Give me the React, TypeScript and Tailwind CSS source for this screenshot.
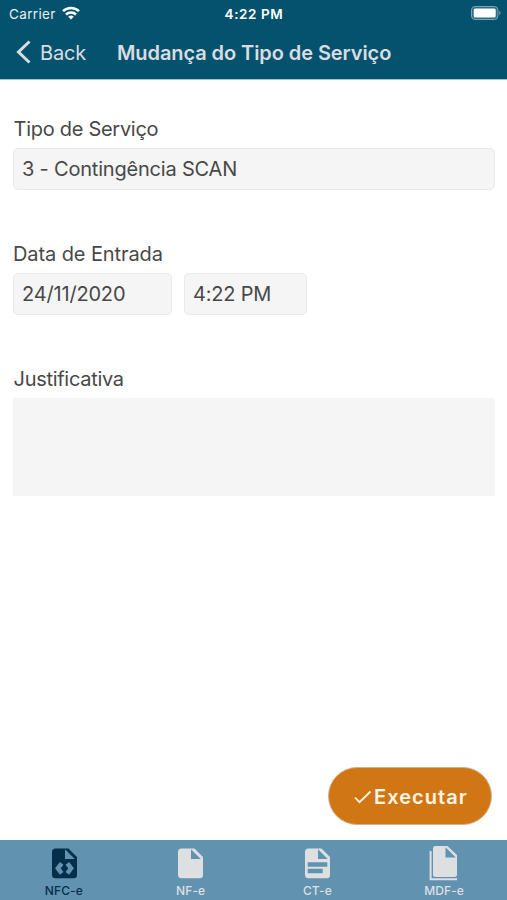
import type { ReactNode } from "react";

// page outline with a folded corner, shared by the first three tabs
const page = "M3.5 4.5H16.5L25 13v18a3.3 3.3 0 0 1-3.3 3.3H3.5A3.5 3.5 0 0 1 0 30.8V8a3.5 3.5 0 0 1 3.5-3.5ZM13 5.200V15H22.800Z";

const tabs: { label: string; active?: boolean; icon: ReactNode }[] = [
  {
    label: "NFC-e",
    active: true,
    icon: (
      <>
        <path fillRule="evenodd" d={page} />
        <path d="M9.700 19.300 5.900 24.300l3.800 5M15.300 19.300l3.800 5-3.800 5" fill="none" stroke="#6193b1" strokeWidth="4.500" />
      </>
    ),
  },
  {
    label: "NF-e",
    icon: <path fillRule="evenodd" d={page} />,
  },
  {
    label: "CT-e",
    icon: (
      <>
        <path fillRule="evenodd" d={page} />
        <path d="M2.700 20.500h19.600M2.700 27h15" fill="none" stroke="#6193b1" strokeWidth="4.400" />
      </>
    ),
  },
  {
    label: "MDF-e",
    icon: (
      <>
        <path fillRule="evenodd" d="M3.500 2h12L25 11v19.500a2.500 2.500 0 0 1-2.500 2.500H3.500A2.500 2.500 0 0 1 1 30.500v-26A2.500 2.500 0 0 1 3.500 2ZM13.500 3.200V13.500H23.800Z" />
        <path d="M-1.400 7v28.300H25" fill="none" stroke="currentColor" strokeWidth="2" />
      </>
    ),
  },
];

function Field({ children, className }: { children: ReactNode; className: string }) {
  return (
    <div className={`flex h-[42px] items-center whitespace-nowrap rounded-[5px] border border-[#e9e9e9] bg-[#f5f5f5] pl-2 text-[20px] ${className}`}>
      {children}
    </div>
  );
}

export default function App() {
  return (
    <div className="flex h-[900px] w-[507px] flex-col overflow-hidden bg-white font-['Inter',sans-serif] text-[#484848]">
      <header className="h-[80px] shrink-0 border-b border-[#9fc3d1] bg-[#05526f]">
        <div className="grid h-[27px] grid-cols-3 items-center pl-[8px] pr-[6px] text-[#e8f0f3]">
          <div className="flex items-center gap-[6px] pl-px">
            <span className="pt-px text-[13.5px] tracking-[0.35px]">Carrier</span>
            <svg className="-mt-0.5" width="18" height="14" viewBox="0 0 18 14" fill="none" stroke="white" strokeWidth="2.500">
              <path d="M1 5.200a11.300 11.300 0 0 1 16 0M4 8.500a7.200 7.200 0 0 1 10 0" />
              <path d="M9 13.500 6.200 10.800a4 4 0 0 1 5.600 0Z" fill="white" stroke="none" />
            </svg>
          </div>
          <span className="-ml-px pt-px text-center text-[13.5px] font-semibold tracking-[0.6px] text-white">4:22 PM</span>
          <svg className="-mt-0.5 justify-self-end" width="30" height="14" viewBox="0 0 30 14">
            <rect x=".5" y=".5" width="26.400" height="13" rx="3.500" fill="#2b6c85" stroke="#7fa5b4" />
            <rect x="2.700" y="2.500" width="22" height="9" rx="1.500" fill="white" />
            <path d="M28.300 4.800q2.500 2.200 0 4.400Z" fill="#7fa5b4" />
          </svg>
        </div>
        <div className="flex h-[52px] items-center whitespace-nowrap pl-4 text-[20px] text-[#d9dde0]">
          <svg className="-mt-0.5" width="15" height="24" viewBox="0 0 15 24" fill="none" stroke="currentColor" strokeWidth="3">
            <path d="M13.500 1.500 2.500 12l11 10.500" />
          </svg>
          <span className="-mt-px ml-[9px] w-[77px] tracking-[-0.2px]">Back</span>
          <h1 className="-mt-px font-semibold tracking-[-0.08px]">Mudança do Tipo de Serviço</h1>
        </div>
      </header>

      <main className="flex flex-1 flex-col pl-[13px] pr-3 text-[20px]">
        <label className="mt-[34px] h-[34px] pl-[0.5px] leading-[30px] tracking-[-0.28px]">Tipo de Serviço</label>
        <Field className="w-full tracking-[-0.2px]">3 - Contingência SCAN</Field>

        <label className="mt-[49px] h-[34px] leading-[30px] tracking-[-0.1px]">Data de Entrada</label>
        <div className="flex gap-3">
          <Field className="w-[159px] tracking-[-0.18px]">24/11/2020</Field>
          <Field className="w-[123px] tracking-[-0.2px]">4:22 PM</Field>
        </div>

        <label className="mt-[49px] h-[34px] pl-[0.5px] leading-[30px] tracking-[-0.29px]">Justificativa</label>
        <div className="h-[98px] bg-[#f5f5f5]" />

        <button className="mb-[15px] mr-[3px] mt-auto flex h-[58px] w-[164px] items-center self-end whitespace-nowrap rounded-full border border-[#d3b490] bg-[#d17615] pl-[25px] text-[20px] font-semibold tracking-[1.06px] text-[#fff5e6]">
          <svg className="mt-0.5 shrink-0" width="18" height="14" viewBox="0 0 18 14" fill="none" stroke="currentColor" strokeWidth="1.800">
            <path d="m1 7.500 4.500 4.700L16.500 1.500" />
          </svg>
          <span className="ml-[2px] pt-0.5">Executar</span>
        </button>
      </main>

      <nav className="grid h-[60px] shrink-0 grid-cols-4 bg-[#6193b1]">
        {tabs.map(tab => (
          <div key={tab.label} className={`flex flex-col items-center pt-1 ${tab.active ? "text-[#032f4b]" : "text-[#dedfe1]"}`}>
            <svg className={`overflow-visible ${tab.active ? "ml-[2px]" : "ml-px"}`} width="25" height="37" viewBox="0 0 25 37" fill="currentColor">
              {tab.icon}
            </svg>
            <span className="ml-px mt-[2px] text-[12px] font-medium leading-[16px] tracking-[0.1px]">{tab.label}</span>
          </div>
        ))}
      </nav>
    </div>
  );
}
